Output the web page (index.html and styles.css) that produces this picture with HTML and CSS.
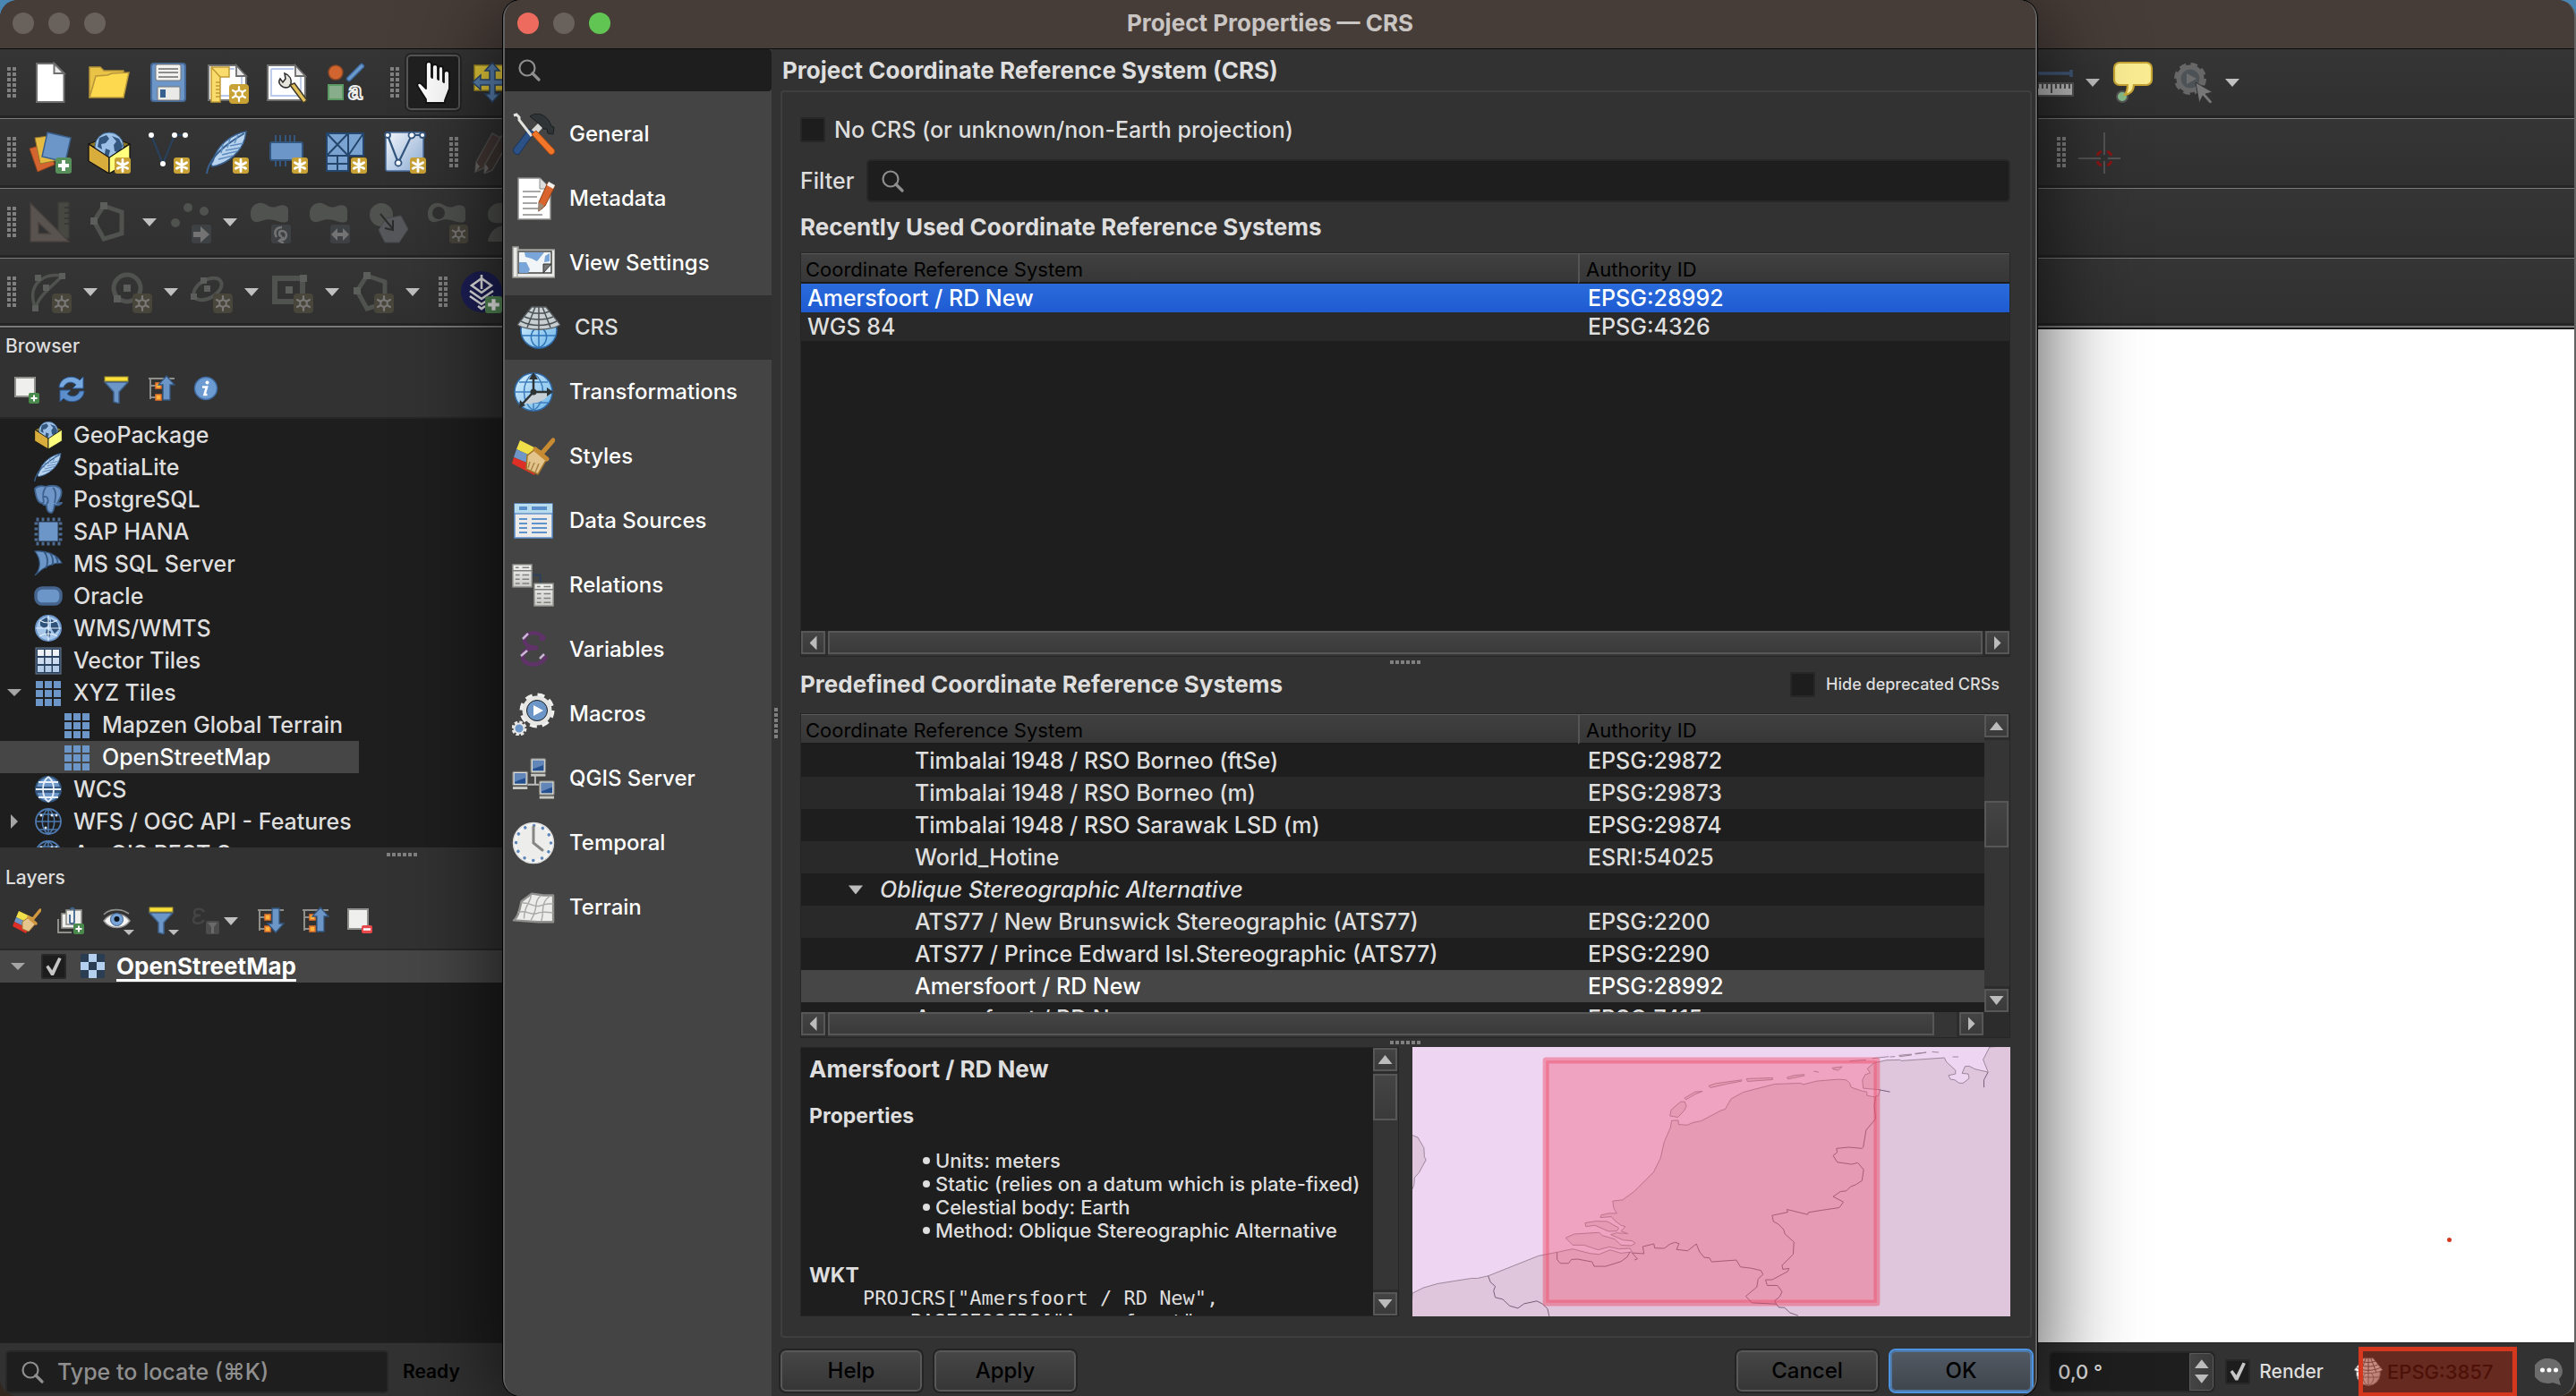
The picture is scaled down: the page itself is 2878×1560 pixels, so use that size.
FILE: index.html
```html
<!DOCTYPE html>
<html lang="en">
<head>
<meta charset="utf-8">
<title>Project Properties — CRS</title>
<link rel="stylesheet" href="styles.css">
</head>
<body>
<svg class="sprite" aria-hidden="true">
  <defs>
    <linearGradient id="gpsFill" x1="0" y1="0" x2="1" y2="1"><stop offset="0" stop-color="#f3f6fb"/><stop offset="1" stop-color="#8fb0d8"/></linearGradient>
    <linearGradient id="globeFill" x1="0" y1="0" x2="1" y2="1"><stop offset="0" stop-color="#d8f0ff"/><stop offset="1" stop-color="#6cb4e8"/></linearGradient>
    <linearGradient id="grayFill" x1="0" y1="0" x2="0" y2="1"><stop offset="0" stop-color="#f2f2f0"/><stop offset="1" stop-color="#c9c9c6"/></linearGradient>
    <g id="relTable"><rect x="0" y="0" width="22" height="26" fill="url(#grayFill)" stroke="#90918c" stroke-width="1.500"/><path d="M0 7h22M3 3.500h4M11 3.500h8M3 12h5M11 12h8M3 17h5M11 17h8M3 22h5M11 22h8" stroke="#80817d" stroke-width="1.600"/></g>
    <g id="serverPc"><rect x="0" y="0" width="17" height="16" rx="1" fill="#e2e2dd" stroke="#7f807b" stroke-width="1.300"/><rect x="2" y="2" width="13" height="12" fill="#25508f"/><path d="M2 2h13v5l-13 5z" fill="#6386b8"/><path d="M0 19h17" stroke="#c9c9c4" stroke-width="3"/></g>
  </defs>
  <symbol id="i-badge-star" viewBox="0 0 18 18"><rect width="18" height="18" rx="3" fill="#c9a235"/><path d="M9 2.500v13M3.400 5.800l11.200 6.400M3.400 12.200l11.200-6.400" stroke="#fff" stroke-width="2.800" stroke-linecap="round"/></symbol>
  <symbol id="i-badge-gear" viewBox="0 0 22 22"><rect width="22" height="22" rx="4" fill="#c9a235"/><path d="M11 3v16M4 7l14 8M4 15l14-8" stroke="#fff" stroke-width="2.200" stroke-linecap="round"/><circle cx="11" cy="11" r="3.800" fill="#c9a235" stroke="#fff" stroke-width="2"/></symbol>
  <symbol id="i-badge-gear-dim" viewBox="0 0 22 22"><rect width="22" height="22" rx="4" fill="#48453b"/><path d="M11 3v16M4 7l14 8M4 15l14-8" stroke="#797977" stroke-width="2.200" stroke-linecap="round"/><circle cx="11" cy="11" r="3.800" fill="#48453b" stroke="#797977" stroke-width="2"/></symbol>
  <symbol id="i-badge-plus" viewBox="0 0 18 18"><rect width="18" height="18" rx="3" fill="#58905b"/><path d="M9 3v12M3 9h12" stroke="#fff" stroke-width="4"/></symbol>
  <symbol id="i-caret" viewBox="0 0 24 24"><path d="M4 8h16l-8 9z" fill="#c0c0c0"/></symbol>
  <symbol id="i-search" viewBox="0 0 26 26"><circle cx="11" cy="11" r="8.500" fill="none" stroke="#8f8f8f" stroke-width="2.200"/><path d="M17 17l7 7" stroke="#8f8f8f" stroke-width="3.200" stroke-linecap="round"/></symbol>

  <symbol id="i-new" viewBox="0 0 48 48"><path d="M9 3h19.500L39.500 14v32H9z" fill="#fff" stroke="#6e6e6e" stroke-width="2"/><path d="M28.500 3v11h11z" fill="#e8e8e8" stroke="#6e6e6e" stroke-width="2"/></symbol>
  <symbol id="i-open" viewBox="0 0 48 48"><path d="M2 41V7h12l4 4h22v8" fill="#e8c346" stroke="#b7953a" stroke-width="1.500"/><path d="M2 41L9 17l13-1 5-2 19-1-6 28z" fill="#fcd94e" stroke="#b7953a" stroke-width="1.500"/></symbol>
  <symbol id="i-save" viewBox="0 0 48 48"><rect x="5" y="3" width="38" height="42" rx="3" fill="#6c96c8" stroke="#476c9c" stroke-width="2"/><rect x="10" y="4" width="28" height="18" rx="2" fill="#f2f2f0" stroke="#777" stroke-width="1"/><path d="M13 9h22M13 13h22M13 18h22" stroke="#6d6d68" stroke-width="1.600"/><rect x="12" y="29" width="25" height="15" rx="1" fill="#e9e9e7" stroke="#777" stroke-width="1"/><rect x="15" y="32" width="6" height="9" fill="#36608f"/></symbol>
  <symbol id="i-layout-page" viewBox="0 0 48 48"><path d="M3 5h30l12 12v27H3z" fill="#fff" stroke="#6e6e6e" stroke-width="2"/><path d="M7 9h25M40 18v21H7V9" fill="none" stroke="#b9c9ee" stroke-width="1.800"/><path d="M34 5v12h11z" fill="#e8e8e8" stroke="#6e6e6e" stroke-width="1.800"/></symbol>
  <symbol id="i-layout-new" viewBox="0 0 48 48"><use href="#i-layout-page"/><path d="M6 7h20v11H16v28H6z" fill="#f9dc6c" stroke="#c09a36" stroke-width="1.500"/><path d="M6 7l10 11M11 24h5M11 28h5M11 32h5M11 36h5M11 40h5" stroke="#c09a36" stroke-width="1.500"/><use href="#i-badge-gear" x="26" y="26" width="22" height="22"/></symbol>
  <symbol id="i-layout-manager" viewBox="0 0 48 48"><use href="#i-layout-page"/><path d="M17 20c-4 6 4 12 10 9l2-3c1-5-1-10-7-12l1 6-3 4z" fill="#e6e6df" stroke="#333" stroke-width="1.600"/><path d="M28 27l15 20 4-3-14-19z" fill="#e2c15a" stroke="#3d3a2a" stroke-width="1.500"/></symbol>
  <symbol id="i-style" viewBox="0 0 48 48"><circle cx="13" cy="13" r="8" fill="#d16530" stroke="#8d4826" stroke-width="1.500"/><path d="M28 20L42 6" stroke="#3f6fa6" stroke-width="6" stroke-linecap="round"/><path d="M28 20L42 6" stroke="#6c9acb" stroke-width="3" stroke-linecap="round"/><rect x="5" y="27" width="16" height="16" fill="#88ad8b" stroke="#599b62" stroke-width="2"/><text x="27" y="43" class="glyph-a">a</text></symbol>
  <symbol id="i-hand" viewBox="0 0 48 48"><path d="M16 47V43L7 29c-2-4 1-5 4-3l5 5V4c0-4 6-4 6 0v14l1 1V7c0-4 6-4 6 0v13l1 1V9c0-4 5-4 5 0v14l1 1V14c0-4 6-4 6 0v17l-5 13v3z" fill="#fff" stroke="#111" stroke-width="1.800" stroke-linejoin="round"/></symbol>
  <symbol id="i-pan-selection" viewBox="0 0 48 48"><rect x="4" y="5" width="34" height="28" fill="#e9cd3b" stroke="#a58f24" stroke-width="1.500"/><path d="M24 2l8 9h-5v10h10v-5l9 8-9 8v-5H27v10h5l-8 9-8-9h5V27H11v5l-9-8 9-8v5h10V11h-5z" fill="#5b84b4" stroke="#2d4b6e" stroke-width="1.500"/></symbol>
  <symbol id="i-add-layer" viewBox="0 0 48 48"><path d="M1 20l20-6 8 24-19 8z" fill="#d5652f" stroke="#8f431f"/><path d="M7 8l22-3 4 28-20 4z" fill="#e5bb42" stroke="#93752a"/><path d="M21 2l26 6-6 27-26-6z" fill="#6c96c8" stroke="#3c608c" stroke-width="1.500"/><use href="#i-badge-plus" x="30" y="30" width="18" height="18"/></symbol>
  <symbol id="i-box" viewBox="0 0 48 48"><path d="M1 15l23-9 23 9-23 12z" fill="#8a7320" stroke="#111"/><circle cx="24" cy="18" r="16" fill="#9cc0e6" stroke="#3c6696"/><path d="M13 8l8-3 3 4-4 5-5 1 1 6-5-3zM27 6l8 3 4 8-3 8-6-2-1-7 3-4zM20 20l5 2-2 8-4-4z" fill="#34577f"/><path d="M1 15l23 15v18L1 34z" fill="#d9ad3c" stroke="#111" stroke-width="1.300"/><path d="M47 15L24 30v18l23-14z" fill="#ffff7d" stroke="#111" stroke-width="1.300"/></symbol>
  <symbol id="i-new-gpkg" viewBox="0 0 48 48"><use href="#i-box"/><use href="#i-badge-star" x="30" y="30" width="18" height="18"/></symbol>
  <symbol id="i-new-shape" viewBox="0 0 48 48"><path d="M5 5l13 32L31 5h12" fill="none" stroke="#28425f" stroke-width="2"/><g fill="#fff"><circle cx="5" cy="5" r="3"/><circle cx="18" cy="37" r="3"/><circle cx="31" cy="5" r="3"/><circle cx="43" cy="5" r="3"/></g><use href="#i-badge-star" x="30" y="30" width="18" height="18"/></symbol>
  <symbol id="i-feather" viewBox="0 0 48 48"><path d="M45 1C28 4 12 17 8 34l-2 3 1 3C22 38 43 24 45 1z" fill="#b7d3ee" stroke="#38618f" stroke-width="1.500"/><path d="M1 48c2-16 16-30 42-45" fill="none" stroke="#38618f" stroke-width="2"/><path d="M14 32l16-4M18 27l17-4M22 22l17-3M27 17l15-3M19 15l-2 10M27 9l-3 10M36 5l-4 9" stroke="#5f8dc0" stroke-width="1.500"/></symbol>
  <symbol id="i-new-spatialite" viewBox="0 0 48 48"><use href="#i-feather"/><use href="#i-badge-star" x="30" y="30" width="18" height="18"/></symbol>
  <symbol id="i-new-memory" viewBox="0 0 48 48"><path d="M12 5v8M17 5v8M23 5v8M28 5v8M33 5v8M12 32v8M17 32v8M23 32v8" stroke="#33567f" stroke-width="2"/><rect x="6" y="13" width="36" height="20" rx="2" fill="#6c96c8" stroke="#33567f" stroke-width="2"/><use href="#i-badge-star" x="30" y="30" width="18" height="18"/></symbol>
  <symbol id="i-new-mesh" viewBox="0 0 48 48"><path d="M3 3h41v25H27v17H3z" fill="#7aa3d1" stroke="#24466c" stroke-width="2"/><path d="M27 3v25H3M3 3l24 25M27 3L3 28M44 3L27 28M15 28v17M3 37h24" fill="none" stroke="#24466c" stroke-width="2"/><use href="#i-badge-star" x="30" y="30" width="18" height="18"/></symbol>
  <symbol id="i-new-gps" viewBox="0 0 48 48"><rect x="3" y="2" width="42" height="43" rx="2" fill="url(#gpsFill)" stroke="#4a6f9f" stroke-width="1.500"/><path d="M5 5l12 31L32 5h12" fill="none" stroke="#33567f" stroke-width="2.200"/><g fill="#fff" stroke="#33567f" stroke-width="1.800"><circle cx="5" cy="5" r="3"/><circle cx="17" cy="36" r="3.500"/><circle cx="32" cy="5" r="3.500"/><circle cx="44" cy="5" r="3"/></g><use href="#i-badge-star" x="30" y="30" width="18" height="18"/></symbol>
  <symbol id="i-pencils" viewBox="0 0 48 48"><path d="M24 3l9 5-19 34-9 4 1-11z" fill="#463a37" stroke="#555552" stroke-width="1.500"/><path d="M34 6l9 5-19 33-9 4 1-11z" fill="#3e3532" stroke="#555552" stroke-width="1.500"/><path d="M5 46l1-11 4 5zM15 48l1-11 4 5z" fill="#6c6c6c"/></symbol>
  <symbol id="i-triangle" viewBox="0 0 48 48"><rect x="33" y="2" width="12" height="40" fill="#484842" stroke="#3c3c3a" stroke-width="1.500"/><path d="M40 8h5M40 14h5M40 20h5M40 26h5" stroke="#333" stroke-width="1.500"/><path d="M2 3l43 43H2zM11 25v12h13z" fill="#595350" fill-rule="evenodd" stroke="#48413e" stroke-width="1.500"/></symbol>
  <symbol id="i-poly" viewBox="0 0 48 48"><path d="M18 6l20 7v24l-20 6L7 23z" fill="none" stroke="#50524f" stroke-width="5"/><rect x="14" y="2" width="8" height="8" fill="#5c5e5c"/><rect x="3" y="19" width="8" height="8" fill="#5c5e5c"/></symbol>
  <symbol id="i-move-points" viewBox="0 0 48 48"><g fill="#50524f"><circle cx="22" cy="8" r="5"/><circle cx="40" cy="12" r="5"/><circle cx="8" cy="25" r="5"/></g><rect x="26" y="27" width="22" height="21" rx="3" fill="#3e4144"/><path d="M28 35h8v-6l10 9-10 9v-6h-8z" fill="#737373"/></symbol>
  <symbol id="i-blob" viewBox="0 0 48 48"><path d="M2 16C1 6 10 0 18 4c5 3 9 5 15 2 6-2 11 0 11 5v10c0 4-5 4-9 3-8-3-14-4-21-1C7 26 2 23 2 16z" fill="#50524f"/></symbol>
  <symbol id="i-rotate" viewBox="0 0 48 48"><use href="#i-blob"/><rect x="25" y="27" width="22" height="21" rx="3" fill="#3e4144"/><path d="M37 40c-4 0-4-6 0-6 6 0 8 9-2 11m4-4l-5 4 5 3M31 41c-4-6 0-11 6-11" fill="none" stroke="#737373" stroke-width="2.500"/></symbol>
  <symbol id="i-scale" viewBox="0 0 48 48"><use href="#i-blob"/><rect x="25" y="27" width="22" height="21" rx="3" fill="#3e4144"/><path d="M26 38l7-7v5h6v-5l7 7-7 7v-5h-6v5z" fill="#737373"/></symbol>
  <symbol id="i-simplify" viewBox="0 0 48 48"><circle cx="16" cy="16" r="13" fill="#50524f"/><path d="M21 20l17-3 8 15-10 15H20l-7-14z" fill="#55575b" stroke="#45474a"/><path d="M15 15l14 17M29 22v11l-9-2" fill="none" stroke="#2c2c2c" stroke-width="2"/></symbol>
  <symbol id="i-ring" viewBox="0 0 48 48"><use href="#i-blob"/><circle cx="14" cy="14" r="7" fill="#323232"/><use href="#i-badge-gear-dim" x="26" y="27" width="21" height="21"/></symbol>
  <symbol id="i-part" viewBox="0 0 48 48"><path d="M3 16C3 6 14 0 22 4v20C12 27 3 25 3 16zM3 46c2-12 10-18 20-18v18z" fill="#50524f"/></symbol>
  <symbol id="i-arc" viewBox="0 0 48 48"><path d="M8 43C-2 20 12 2 38 6M8 43C10 30 22 22 38 6" fill="none" stroke="#50524f" stroke-width="3.500"/><g fill="#5c5e5c"><rect x="34" y="3" width="7" height="7"/><rect x="7" y="5" width="7" height="7"/><rect x="16" y="16" width="7" height="7"/><rect x="4" y="39" width="7" height="7"/></g><use href="#i-badge-gear-dim" x="26" y="26" width="22" height="22"/></symbol>
  <symbol id="i-circle" viewBox="0 0 48 48"><circle cx="20" cy="20" r="15" fill="none" stroke="#50524f" stroke-width="5"/><rect x="16" y="16" width="8" height="8" fill="#5c5e5c"/><rect x="5" y="28" width="8" height="8" fill="#5c5e5c"/><use href="#i-badge-gear-dim" x="26" y="26" width="22" height="22"/></symbol>
  <symbol id="i-ellipse" viewBox="0 0 48 48"><ellipse cx="20" cy="21" rx="17" ry="10" transform="rotate(-30 20 21)" fill="none" stroke="#50524f" stroke-width="4"/><g fill="#5c5e5c"><rect x="12" y="8" width="7" height="7"/><rect x="16" y="17" width="7" height="7"/><rect x="1" y="26" width="7" height="7"/></g><use href="#i-badge-gear-dim" x="26" y="26" width="22" height="22"/></symbol>
  <symbol id="i-rect" viewBox="0 0 48 48"><rect x="5" y="9" width="31" height="26" fill="none" stroke="#50524f" stroke-width="6"/><rect x="17" y="18" width="8" height="8" fill="#5c5e5c"/><rect x="33" y="5" width="8" height="8" fill="#5c5e5c"/><use href="#i-badge-gear-dim" x="26" y="26" width="22" height="22"/></symbol>
  <symbol id="i-polygon-new" viewBox="0 0 48 48"><use href="#i-poly"/><use href="#i-badge-gear-dim" x="26" y="26" width="22" height="22"/></symbol>
  <symbol id="i-mergin" viewBox="0 0 48 48"><circle cx="24" cy="24" r="23" fill="#1d1f57"/><path d="M24 5v16M24 9l-11 8 11 8 11-8zM11 23l13 9 13-9M11 29l13 9 13-9M20 40l4 3 4-3" fill="none" stroke="#eee" stroke-width="2.600"/><use href="#i-badge-plus" x="28" y="29" width="19" height="19"/></symbol>
  <symbol id="i-measure" viewBox="0 0 48 48"><path d="M0 14h45M45 10v8" stroke="#41597a" stroke-width="3.500"/><rect x="-4" y="25" width="51" height="14" fill="#bcbcbc" stroke="#555" stroke-width="2"/><path d="M3 26v5M8 26v5M13 26v5M18 26v5M23 26v10M28 26v5M33 26v5M38 26v5M43 26v5" stroke="#444" stroke-width="1.800"/></symbol>
  <symbol id="i-tip" viewBox="0 0 48 48"><circle cx="12" cy="40" r="6" fill="#84b989" stroke="#555" stroke-width="2"/><path d="M9 2h30a6 6 0 0 1 6 6v13a6 6 0 0 1-6 6H25c0 6-4 10-10 11 2-3 3-7 3-11H9a6 6 0 0 1-6-6V8a6 6 0 0 1 6-6z" fill="#faec92" stroke="#c6a433" stroke-width="2.200"/></symbol>
  <symbol id="i-gear-run" viewBox="0 0 48 48"><circle cx="22" cy="20" r="15" fill="none" stroke="#676767" stroke-width="6" stroke-dasharray="7 4.780"/><circle cx="22" cy="20" r="13" fill="#4d5257" stroke="#676767" stroke-width="5"/><path d="M18 14l11 6-11 6z" fill="#6d6d6d"/><path d="M28 24l19 11-8 2 8 9-3 2-8-9-4 8z" fill="#777" stroke="#333"/></symbol>
  <symbol id="i-crosshair" viewBox="0 0 48 48"><path d="M29 2v25M29 34v14M0 31h25M33 31h14" stroke="#545454" stroke-width="2"/><circle cx="29" cy="31" r="8.500" fill="none" stroke="#8a1515" stroke-width="3" stroke-dasharray="7 6.350" stroke-dashoffset="-3"/></symbol>

  <symbol id="s-add" viewBox="0 0 32 32"><rect x="3" y="3" width="22" height="21" fill="#efefed" stroke="#8f908b" stroke-width="2"/><rect x="18" y="20" width="12" height="12" rx="2" fill="#498a4c"/><path d="M24 22.500v7M20.500 26h7" stroke="#fff" stroke-width="2"/></symbol>
  <symbol id="s-refresh" viewBox="0 0 32 32"><path d="M2 14C3 2 18-1 25 6l4-4v13H17l4-4c-5-5-12-3-14 3z" fill="#77a8de" stroke="#2c5c99"/><path d="M30 18c-1 12-16 15-23 8l-4 4V17h12l-4 4c5 5 12 3 14-3z" fill="#5b8ecb" stroke="#2c5c99"/></symbol>
  <symbol id="s-filter" viewBox="0 0 32 32"><path d="M3 8l10 11v11l6 2V19L29 8z" fill="#6c96c8" stroke="#3c608c" stroke-width="1.500"/><rect x="3" y="2" width="26" height="5" fill="#fbe03a" stroke="#9c8c2c"/></symbol>
  <symbol id="s-tree" viewBox="0 0 32 32"><path d="M2 4h29M4 4v23M4 12h6M4 25h6" fill="none" stroke="#8f908b" stroke-width="2"/><rect x="10" y="9" width="6" height="6" fill="#fcb43c" stroke="#e5742c" stroke-width="1.500"/><rect x="10" y="22" width="6" height="6" fill="#fcb43c" stroke="#e5742c" stroke-width="1.500"/></symbol>
  <symbol id="s-collapse" viewBox="0 0 32 32"><use href="#s-tree"/><path d="M22 1l9 10h-5v17h-8V11h-5z" fill="#6c96c8" stroke="#33567f" stroke-width="1.300"/></symbol>
  <symbol id="s-expand" viewBox="0 0 32 32"><use href="#s-tree"/><path d="M22 29l9-10h-5V2h-8v17h-5z" fill="#6c96c8" stroke="#33567f" stroke-width="1.300"/></symbol>
  <symbol id="s-info" viewBox="0 0 32 32"><circle cx="16" cy="15" r="12.500" fill="#6c9bd2" stroke="#3f6ba2" stroke-width="1.500"/><circle cx="17.500" cy="8.500" r="2" fill="#fff"/><path d="M12 13.500h5l-2.500 8.500h3" fill="none" stroke="#fff" stroke-width="2.600"/></symbol>
  <symbol id="s-brush" viewBox="0 0 32 32"><path d="M7 5l17 8-3 7L4 12z" fill="#f0df4a"/><path d="M4 12l17 8-3 5L2 17z" fill="#6f96c8"/><path d="M2 17l16 8-3 5L0 22z" fill="#dd2f26"/><path d="M11 17l7-5 8 7-8 9-7-3z" fill="#e6c58c" stroke="#a4762e"/><path d="M18 12l8 7M22 15l9-11" stroke="#cf963e" stroke-width="3.500" stroke-linecap="round"/></symbol>
  <symbol id="s-group" viewBox="0 0 32 32"><path d="M1 14v15h15" fill="none" stroke="#8f908b" stroke-width="2"/><rect x="5" y="8" width="17" height="16" fill="#efefed" stroke="#8f908b" stroke-width="1.600"/><rect x="10" y="4" width="17" height="16" fill="#efefed" stroke="#8f908b" stroke-width="1.600"/><path d="M14 9v8c0 3 5 3 5 0V4c0-3-4-3-4 0" fill="none" stroke="#3f648f" stroke-width="1.800"/><rect x="18" y="19" width="12" height="12" rx="2" fill="#498a4c"/><path d="M24 21.500v7M20.500 25h7" stroke="#fff" stroke-width="2"/></symbol>
  <symbol id="s-eye" viewBox="0 0 36 34"><path d="M2 10c6-7 20-7 28-1" fill="none" stroke="#8f908b" stroke-width="1.600"/><path d="M2 17c7-10 22-10 29 0-7 10-22 10-29 0z" fill="#f5f5f5" stroke="#9a9a98" stroke-width="1.500"/><circle cx="16.500" cy="15.500" r="7" fill="#77a3d6" stroke="#3c608c"/><circle cx="16.500" cy="15" r="3" fill="#0c1420"/><path d="M24 27h12l-6 6z" fill="#bdbdbd"/></symbol>
  <symbol id="s-filter-menu" viewBox="0 0 36 34"><use href="#s-filter" width="32" height="32"/><path d="M24 27h12l-6 6z" fill="#bdbdbd"/></symbol>
  <symbol id="s-expr-filter" viewBox="0 0 32 32"><path d="M14 6C11 1 3 2 3 7c0 3 3 3 7 3-6 0-8 2-8 5 0 5 9 5 12 0" fill="none" stroke="#444" stroke-width="2.500"/><rect x="16" y="16" width="15" height="15" rx="2" fill="#4c4c4c"/><path d="M18 18h11l-4 5v7h-3v-7z" fill="#6a6a6a"/></symbol>
  <symbol id="s-remove" viewBox="0 0 32 32"><rect x="3" y="3" width="22" height="22" fill="#efefed" stroke="#8f908b" stroke-width="2"/><rect x="18" y="21" width="12" height="9" rx="2" fill="#e8474b"/><path d="M20 25.500h8" stroke="#fff" stroke-width="2.500"/></symbol>

  <symbol id="t-elephant" viewBox="0 0 32 32"><path d="M1 4c4-4 9-3 12-2 6-2 14-2 17 3 2 5-2 12-4 15h5c-2 3-6 3-8 2-1 4-1 9-4 9s-5-3-5-9c-3 1-4 0-5-2-4 1-7-6-8-16z" fill="#6f96c8" stroke="#3f638f" stroke-width="1.800"/><path d="M13 3c-4 4-3 12-2 17M21 3c5 4 3 12 2 17M14 21c3-2 2-9-3-8" fill="none" stroke="#3f638f" stroke-width="1.800"/></symbol>
  <symbol id="t-chip" viewBox="0 0 32 32"><rect x="2.500" y="2.500" width="27" height="27" fill="none" stroke="#4d6a90" stroke-width="4" stroke-dasharray="3 3"/><rect x="5" y="5" width="22" height="22" fill="#6c96c8" stroke="#27374d"/></symbol>
  <symbol id="t-sail" viewBox="0 0 32 32"><path d="M1 2c14-1 25 4 30 13-12 0-22 6-30 14 7-8 7-18 0-27z" fill="#6c96c8" stroke="#33567f" stroke-width="1.200"/><path d="M11 2c5 6 5 14 2 19M18 4c4 6 4 10 2 14M24 8c2 3 3 6 2 8" fill="none" stroke="#33567f" stroke-width="1.800"/></symbol>
  <symbol id="t-oracle" viewBox="0 0 32 32"><rect x="2" y="7" width="28" height="18" rx="7" fill="#6c96c8" stroke="#46658e" stroke-width="3.500"/></symbol>
  <symbol id="t-globe-land" viewBox="0 0 32 32"><circle cx="16" cy="16" r="14" fill="#a6c6ea" stroke="#6c96c8" stroke-width="2"/><path d="M7 8l7-4 4 4-3 6-4 2-4-3zM19 6l7 4 2 7-5 5-4-6zM14 17l5 3-2 7-4-5z" fill="#2f5178"/><path d="M16 2v28M2 16h28M6 7c6 4 14 4 20 0M6 25c6-4 14-4 20 0" fill="none" stroke="#e4f0fb" stroke-width="1.200"/></symbol>
  <symbol id="t-grid" viewBox="0 0 32 32"><g fill="#6c96c8"><rect x="2" y="3" width="8" height="8"/><rect x="12" y="3" width="8" height="8"/><rect x="22" y="3" width="8" height="8"/><rect x="2" y="13" width="8" height="8"/><rect x="12" y="13" width="8" height="8"/><rect x="22" y="13" width="8" height="8"/><rect x="2" y="23" width="8" height="8"/><rect x="12" y="23" width="8" height="8"/><rect x="22" y="23" width="8" height="8"/></g></symbol>
  <symbol id="t-grid-light" viewBox="0 0 32 32"><rect x="2" y="2" width="28" height="29" fill="#28425f" stroke="#6b7c92"/><g fill="#eef2f7"><rect x="4" y="4" width="7" height="7"/><rect x="12.500" y="4" width="7" height="7"/><rect x="21" y="4" width="7" height="7"/></g><g fill="#cddcee"><rect x="4" y="13" width="7" height="7"/><rect x="12.500" y="13" width="7" height="7"/><rect x="21" y="13" width="7" height="7"/></g><g fill="#b4cce8"><rect x="4" y="22" width="7" height="7"/><rect x="12.500" y="22" width="7" height="7"/><rect x="21" y="22" width="7" height="7"/></g></symbol>
  <symbol id="t-globe-wcs" viewBox="0 0 32 32"><circle cx="16" cy="16" r="14" fill="#6c96c8" stroke="#33567f" stroke-width="2"/><path d="M2 13h28v7H2z" fill="#33567f"/><path d="M2 16h28M5 8h22M5 25h22M16 2c-8 6-8 22 0 28M16 2c8 6 8 22 0 28" fill="none" stroke="#e8f0fa" stroke-width="1.800"/></symbol>
  <symbol id="t-globe-wfs" viewBox="0 0 32 32"><circle cx="16" cy="16" r="14" fill="none" stroke="#4e7ab0" stroke-width="1.800"/><path d="M2 16h28M5 8h22M5 25h22M16 2v28M16 2c-9 6-9 22 0 28M16 2c9 6 9 22 0 28" fill="none" stroke="#4e7ab0" stroke-width="1.500"/><g fill="#dfe8f4"><circle cx="8" cy="9" r="1.500"/><circle cx="20" cy="9" r="1.500"/><circle cx="25" cy="9" r="1.500"/><circle cx="13" cy="23" r="1.500"/></g></symbol>
  <symbol id="t-raster" viewBox="0 0 27 27"><path d="M0 0h27v27H0z" fill="#2b3d53"/><path d="M9 0h9v9H9zM0 9h9v9H0zM18 9h9v9h-9zM9 18h9v9H9z" fill="#b5d0ee"/></symbol>

  <symbol id="d-tools" viewBox="0 0 48 48"><path d="M20 4c8-6 20-2 24 11l3 1-1 8-6-1-1-5c-4 1-6-1-8-5z" fill="#2f3437" stroke="#1c1f21"/><path d="M29 12l5 5-8 9-6-5z" fill="#d8d8d4"/><path d="M25 22L8 46c-3 2-8-2-6-6l17-22z" fill="#2b5187" stroke="#16335c"/><path d="M2 3l3-1 3 3v3l14 18" fill="none" stroke="#e2e2df" stroke-width="3"/><path d="M22 24l5-4 20 21c2 4-2 7-5 5z" fill="#f1762a" stroke="#b14a0d"/></symbol>
  <symbol id="d-metadata" viewBox="0 0 48 48"><path d="M7 1h24l12 12v34H7z" fill="#fff" stroke="#8b8b88" stroke-width="1.500"/><path d="M12 16h20M12 22h16M12 29h16M12 35h22M12 42h22" stroke="#8b8b88" stroke-width="1.500"/><path d="M31 1v12h12" fill="#ddd" stroke="#8b8b88"/><path d="M40 6l8 4-11 22-7 6V28z" fill="#d9652c" stroke="#8d3f17"/><path d="M41 5l7 4-2 4-7-4z" fill="#f2f0ee"/><path d="M30 28l6 4-7 7z" fill="#9a8a78"/></symbol>
  <symbol id="d-view" viewBox="0 0 48 48"><path d="M1 6h6v3h41v31H1z" fill="#e9e9e7" stroke="#9a9a97" stroke-width="1.500"/><rect x="7" y="11" width="37" height="24" fill="#f2f5f8" stroke="#444" stroke-width="1.500"/><path d="M14 12h22l-4 5-4 5-6-3-7-2zM8 23h8l4 8-2 4H8zM42 13v9l-6 1 1-7z" fill="#79a5d8"/><path d="M35 35V25h9l-9 10z" fill="#777" stroke="#333"/><path d="M6 7v34" stroke="#9a9a97"/></symbol>
  <symbol id="d-crs" viewBox="0 0 48 48"><circle cx="24" cy="27" r="20" fill="url(#globeFill)" stroke="#2f6aa8" stroke-width="1.500"/><path d="M24 22v25M5 33h38M24 22c-13 8-10 20 0 25M24 22c13 8 10 20 0 25" fill="none" stroke="#2f74b8" stroke-width="1.500"/><path d="M16 1h16l16 20c-12 7-36 7-48 0z" fill="#c8cfd3" stroke="#555a5e" stroke-width="1.300"/><path d="M12 6c7 3 17 3 24 0M8 12c9 4 23 4 32 0M4 17c12 6 28 6 40 0M20 1l-9 23M24 1v25M28 1l9 23" fill="none" stroke="#4d5256" stroke-width="1.500"/></symbol>
  <symbol id="d-transform" viewBox="0 0 48 48"><circle cx="24" cy="24" r="21" fill="url(#globeFill)" stroke="#2f6aa8" stroke-width="1.500"/><path d="M3 24h42M8 13h32M8 36h32M24 3c-14 10-14 32 0 42M24 3c14 10 14 32 0 42M24 3v42" fill="none" stroke="#3f7dbb" stroke-width="1.500"/><path d="M24 24h18c-2 9-14 14-29 13z" fill="#c6d0d6"/><path d="M24 24V6M24 24h18M24 24L11 38" stroke="#2e3336" stroke-width="2.500"/><path d="M24 2l5 8H19zM46 24l-7 5V19zM8 42l1-9 6 6z" fill="#2e3336"/><circle cx="24" cy="24" r="3.500" fill="#2e3336"/></symbol>
  <symbol id="d-styles" viewBox="0 0 48 48"><path d="M9 6l26 13-4 9L5 16z" fill="#efdf49"/><path d="M5 16l26 12-3 8L2 25z" fill="#6f96c8"/><path d="M2 25l26 11-3 9L0 32z" fill="#dd2f26"/><path d="M17 23l9-7 13 11-10 17-13-6z" fill="#e3c48c" stroke="#9e7028" stroke-width="1.500"/><path d="M20 30l-2 7M25 31l-4 9M30 32l-4 10" stroke="#a98446" stroke-width="1.500"/><path d="M26 16l13 11M33 21L46 6" stroke="#c78b33" stroke-width="5" stroke-linecap="round"/></symbol>
  <symbol id="d-sources" viewBox="0 0 48 48"><rect x="3" y="5" width="42" height="38" fill="#ecebea" stroke="#5b8fcb" stroke-width="1.500"/><path d="M3 5h42v10H3z" fill="#b6dcee"/><path d="M3 16h42" stroke="#5b8fcb" stroke-width="1.500"/><path d="M8 10h9M22 10h17" stroke="#5b8fcb" stroke-width="4"/><path d="M8 22h9M22 22h17M8 27h9M22 27h17M8 32h9M22 32h17M8 37h9M22 37h17" stroke="#5f93cc" stroke-width="2"/></symbol>
  <symbol id="d-relations" viewBox="0 0 50 50"><path d="M22 13h11v12" fill="none" stroke="#2a425f" stroke-width="1.800"/><use href="#relTable" x="1" y="1"/><use href="#relTable" x="26" y="23"/></symbol>
  <symbol id="d-variables" viewBox="0 0 48 48"><path d="M36 12C32 3 14 3 14 13c0 6 7 9 15 9-10 0-17 3-17 10 0 11 22 12 26-1" fill="none" stroke="#603368" stroke-width="4.500"/><circle cx="34" cy="11" r="3.500" fill="#603368"/><path d="M12 12l6-6M10 31l7-6M31 34l5-5" stroke="#c9b7d6" stroke-width="2.500"/></symbol>
  <symbol id="d-macros" viewBox="0 0 48 48"><circle cx="28" cy="20" r="16.500" fill="none" stroke="#efefed" stroke-width="6" stroke-dasharray="7.400 5.560"/><circle cx="28" cy="20" r="14" fill="#6c96c8" stroke="#e6e6e4" stroke-width="5"/><circle cx="28" cy="20" r="11.500" fill="#6c96c8" stroke="#222"/><path d="M24 14v12l11-6z" fill="#fff"/><circle cx="8" cy="40" r="7" fill="none" stroke="#e6e6e4" stroke-width="3" stroke-dasharray="3.500 2"/><circle cx="8" cy="40" r="5.500" fill="#6c96c8" stroke="#e6e6e4" stroke-width="2"/></symbol>
  <symbol id="d-server" viewBox="0 0 50 50"><path d="M27 22v11M16 32h16" stroke="#bbb" stroke-width="2"/><use href="#serverPc" x="1" y="17"/><use href="#serverPc" x="22" y="2"/><use href="#serverPc" x="32" y="28"/></symbol>
  <symbol id="d-clock" viewBox="0 0 48 48"><circle cx="24" cy="24" r="22.500" fill="#f4f4f2" stroke="#ddd" stroke-width="1.500"/><circle cx="24" cy="24" r="19" fill="#ededeb"/><circle cx="24" cy="24" r="19.500" fill="none" stroke="#5d86ba" stroke-width="3.500" stroke-linecap="round" stroke-dasharray="0.100 10.110"/><path d="M24 6v18l10 8" fill="none" stroke="#858682" stroke-width="3" stroke-linecap="round"/></symbol>
  <symbol id="d-terrain" viewBox="0 0 50 48"><path d="M2 39c6-4 7-14 9-22l12-9 14 2h11v31H30z" fill="#ececea" stroke="#8f908d" stroke-width="2.500" stroke-linejoin="round"/><path d="M11 19c9-2 14 6 22 3s10-2 15-2M7 30c8-4 16 4 22 1s12-1 19-1M22 9c1 8-8 12-8 28M34 10c-10 8-2 14-12 29M44 11c-12 8-6 20-10 29" fill="none" stroke="#a9aaa7" stroke-width="1.500"/></symbol>
</svg>

<div class="main-window">
  <header class="titlebar">
    <span class="light"></span><span class="light"></span><span class="light"></span>
  </header>

  <div class="toolbars">
    <div class="toolbar">
      <span class="grip"></span>
      <button class="tool" aria-label="New Project"><svg><use href="#i-new"/></svg></button>
      <button class="tool" aria-label="Open Project"><svg><use href="#i-open"/></svg></button>
      <button class="tool" aria-label="Save Project"><svg><use href="#i-save"/></svg></button>
      <button class="tool" aria-label="New Print Layout"><svg><use href="#i-layout-new"/></svg></button>
      <button class="tool" aria-label="Layout Manager"><svg><use href="#i-layout-manager"/></svg></button>
      <button class="tool" aria-label="Style Manager"><svg><use href="#i-style"/></svg></button>
      <span class="grip grip-next"></span>
      <button class="tool tool-active" aria-label="Pan Map"><svg><use href="#i-hand"/></svg></button>
      <button class="tool" aria-label="Pan Map to Selection"><svg><use href="#i-pan-selection"/></svg></button>
      <div class="tool-end">
        <button class="tool" aria-label="Measure"><svg><use href="#i-measure"/></svg></button>
        <button class="drop" aria-label="Measure options"><svg><use href="#i-caret"/></svg></button>
        <button class="tool" aria-label="Map Tips"><svg><use href="#i-tip"/></svg></button>
        <button class="tool" aria-label="Run Feature Action"><svg><use href="#i-gear-run"/></svg></button>
        <button class="drop" aria-label="Action options"><svg><use href="#i-caret"/></svg></button>
      </div>
    </div>
    <div class="toolbar">
      <span class="grip"></span>
      <button class="tool" aria-label="Data Source Manager"><svg><use href="#i-add-layer"/></svg></button>
      <button class="tool" aria-label="New GeoPackage Layer"><svg><use href="#i-new-gpkg"/></svg></button>
      <button class="tool" aria-label="New Shapefile Layer"><svg><use href="#i-new-shape"/></svg></button>
      <button class="tool" aria-label="New SpatiaLite Layer"><svg><use href="#i-new-spatialite"/></svg></button>
      <button class="tool" aria-label="New Scratch Layer"><svg><use href="#i-new-memory"/></svg></button>
      <button class="tool" aria-label="New Mesh Layer"><svg><use href="#i-new-mesh"/></svg></button>
      <button class="tool" aria-label="New GPX Layer"><svg><use href="#i-new-gps"/></svg></button>
      <span class="grip grip-next"></span>
      <button class="tool" aria-label="Toggle Editing" disabled><svg><use href="#i-pencils"/></svg></button>
      <div class="tool-end tool-end-narrow">
        <span class="grip"></span>
        <button class="tool" aria-label="Capture Coordinate"><svg><use href="#i-crosshair"/></svg></button>
      </div>
    </div>
    <div class="toolbar">
      <span class="grip"></span>
      <button class="tool" aria-label="Advanced Digitizing" disabled><svg><use href="#i-triangle"/></svg></button>
      <button class="tool" aria-label="Move Feature" disabled><svg><use href="#i-poly"/></svg></button>
      <button class="drop" aria-label="Digitize options"><svg><use href="#i-caret"/></svg></button>
      <button class="tool" aria-label="Copy and Move" disabled><svg><use href="#i-move-points"/></svg></button>
      <button class="drop" aria-label="Move options"><svg><use href="#i-caret"/></svg></button>
      <button class="tool" aria-label="Rotate Feature" disabled><svg><use href="#i-rotate"/></svg></button>
      <button class="tool" aria-label="Scale Feature" disabled><svg><use href="#i-scale"/></svg></button>
      <button class="tool" aria-label="Simplify Feature" disabled><svg><use href="#i-simplify"/></svg></button>
      <button class="tool" aria-label="Add Ring" disabled><svg><use href="#i-ring"/></svg></button>
      <button class="tool" aria-label="Add Part" disabled><svg><use href="#i-part"/></svg></button>
    </div>
    <div class="toolbar toolbar-last">
      <span class="grip"></span>
      <button class="tool" aria-label="Circular String" disabled><svg><use href="#i-arc"/></svg></button>
      <button class="drop" aria-label="Arc options"><svg><use href="#i-caret"/></svg></button>
      <button class="tool" aria-label="Add Circle" disabled><svg><use href="#i-circle"/></svg></button>
      <button class="drop" aria-label="Circle options"><svg><use href="#i-caret"/></svg></button>
      <button class="tool" aria-label="Add Ellipse" disabled><svg><use href="#i-ellipse"/></svg></button>
      <button class="drop" aria-label="Ellipse options"><svg><use href="#i-caret"/></svg></button>
      <button class="tool" aria-label="Add Rectangle" disabled><svg><use href="#i-rect"/></svg></button>
      <button class="drop" aria-label="Rectangle options"><svg><use href="#i-caret"/></svg></button>
      <button class="tool" aria-label="Add Regular Polygon" disabled><svg><use href="#i-polygon-new"/></svg></button>
      <button class="drop" aria-label="Polygon options"><svg><use href="#i-caret"/></svg></button>
      <span class="grip grip-next"></span>
      <button class="tool" aria-label="Add 3D Tiles"><svg><use href="#i-mergin"/></svg></button>
    </div>
  </div>

  <div class="workspace">
    <div class="docks">
      <section class="dock browser">
        <h2 class="dock-title">Browser</h2>
        <div class="dock-tools">
          <button aria-label="Add Selected Layers"><svg><use href="#s-add"/></svg></button>
          <button aria-label="Refresh"><svg><use href="#s-refresh"/></svg></button>
          <button aria-label="Filter Browser"><svg><use href="#s-filter"/></svg></button>
          <button aria-label="Collapse All"><svg><use href="#s-collapse"/></svg></button>
          <button aria-label="Properties"><svg><use href="#s-info"/></svg></button>
        </div>
        <div class="tree-view">
          <ul class="tree">
            <li><span class="twist"></span><svg><use href="#i-box"/></svg>GeoPackage</li>
            <li><span class="twist"></span><svg><use href="#i-feather"/></svg>SpatiaLite</li>
            <li><span class="twist"></span><svg><use href="#t-elephant"/></svg>PostgreSQL</li>
            <li><span class="twist"></span><svg><use href="#t-chip"/></svg>SAP HANA</li>
            <li><span class="twist"></span><svg><use href="#t-sail"/></svg>MS SQL Server</li>
            <li><span class="twist"></span><svg><use href="#t-oracle"/></svg>Oracle</li>
            <li><span class="twist"></span><svg><use href="#t-globe-land"/></svg>WMS/WMTS</li>
            <li><span class="twist"></span><svg><use href="#t-grid-light"/></svg>Vector Tiles</li>
            <li><span class="twist twist-open"></span><svg><use href="#t-grid"/></svg>XYZ Tiles</li>
            <li class="child"><span class="twist"></span><svg><use href="#t-grid"/></svg>Mapzen Global Terrain</li>
            <li class="child selected"><span class="twist"></span><svg><use href="#t-grid"/></svg>OpenStreetMap</li>
            <li><span class="twist"></span><svg><use href="#t-globe-wcs"/></svg>WCS</li>
            <li><span class="twist twist-closed"></span><svg><use href="#t-globe-wfs"/></svg>WFS / OGC API - Features</li>
            <li><span class="twist"></span><svg><use href="#t-globe-wfs"/></svg>ArcGIS REST Servers</li>
          </ul>
        </div>
      </section>
      <div class="split-h"><span class="dots-h"></span></div>
      <section class="dock layers">
        <h2 class="dock-title">Layers</h2>
        <div class="dock-tools">
          <button aria-label="Open Layer Styling"><svg><use href="#s-brush"/></svg></button>
          <button aria-label="Add Group"><svg><use href="#s-group"/></svg></button>
          <button aria-label="Manage Map Themes"><svg class="wide"><use href="#s-eye"/></svg></button>
          <button aria-label="Filter Legend"><svg class="wide"><use href="#s-filter-menu"/></svg></button>
          <button class="menu" aria-label="Filter by Expression"><svg><use href="#s-expr-filter"/></svg><svg class="mini"><use href="#i-caret"/></svg></button>
          <button aria-label="Expand All"><svg><use href="#s-expand"/></svg></button>
          <button aria-label="Collapse All"><svg><use href="#s-collapse"/></svg></button>
          <button aria-label="Remove Layer"><svg><use href="#s-remove"/></svg></button>
        </div>
        <div class="layer-view">
          <div class="layer-row">
            <span class="twist twist-open"></span>
            <input type="checkbox" id="osm" class="check" checked>
            <svg><use href="#t-raster"/></svg>
            <label for="osm">OpenStreetMap</label>
          </div>
        </div>
      </section>
    </div>
    <main class="canvas"><span class="marker"></span></main>
  </div>

  <footer class="statusbar">
    <div class="locator"><svg><use href="#i-search"/></svg><input type="text" aria-label="Locate" placeholder="Type to locate (⌘K)"></div>
    <span class="ready">Ready</span>
    <div class="status-end">
      <div class="spin">
        <input type="text" aria-label="Rotation" value="0,0 °">
        <div class="spin-buttons"><button aria-label="Increase"><i class="tri up"></i></button><button aria-label="Decrease"><i class="tri down"></i></button></div>
      </div>
      <label class="render"><input type="checkbox" class="check" checked>Render</label>
      <button class="crs-status"><svg><use href="#d-crs"/></svg><span>EPSG:3857</span></button>
      <button class="messages" aria-label="Messages"><svg viewBox="0 0 32 30"><path d="M16 0a16 14 0 1 0 4 27l9 3-2-7A16 14 0 0 0 16 0z" fill="#6c6c6c"/><g fill="#fff"><circle cx="8.500" cy="13" r="2.500"/><circle cx="16" cy="13" r="2.500"/><circle cx="23.500" cy="13" r="2.500"/></g></svg></button>
    </div>
  </footer>
</div>

<div class="dialog" role="dialog" aria-labelledby="dialog-title">
  <header class="titlebar">
    <span class="light close"></span><span class="light"></span><span class="light zoom"></span>
    <h1 id="dialog-title">Project Properties — CRS</h1>
  </header>
  <div class="dialog-body">
    <aside class="sidebar">
      <div class="side-search"><svg><use href="#i-search"/></svg><input type="text" aria-label="Search settings"></div>
      <nav class="side-list">
        <button><svg><use href="#d-tools"/></svg>General</button>
        <button><svg><use href="#d-metadata"/></svg>Metadata</button>
        <button><svg><use href="#d-view"/></svg>View Settings</button>
        <button class="current"><svg><use href="#d-crs"/></svg>CRS</button>
        <button><svg><use href="#d-transform"/></svg>Transformations</button>
        <button><svg><use href="#d-styles"/></svg>Styles</button>
        <button><svg><use href="#d-sources"/></svg>Data Sources</button>
        <button><svg><use href="#d-relations"/></svg>Relations</button>
        <button><svg><use href="#d-variables"/></svg>Variables</button>
        <button><svg><use href="#d-macros"/></svg>Macros</button>
        <button><svg><use href="#d-server"/></svg>QGIS Server</button>
        <button><svg><use href="#d-clock"/></svg>Temporal</button>
        <button><svg><use href="#d-terrain"/></svg>Terrain</button>
      </nav>
    </aside>
    <div class="split-v"><span class="dots-v"></span></div>
    <div class="pane">
      <h2 class="pane-title">Project Coordinate Reference System (CRS)</h2>
      <div class="frame">
        <label class="no-crs"><input type="checkbox" class="check">No CRS (or unknown/non-Earth projection)</label>
        <div class="filter-row">
          <label for="filter">Filter</label>
          <div class="filter-box"><svg><use href="#i-search"/></svg><input type="text" id="filter"></div>
        </div>
        <h3 class="section-title">Recently Used Coordinate Reference Systems</h3>
        <div class="view recent">
          <div class="view-body">
            <table>
              <colgroup><col class="col-name"><col></colgroup>
              <thead><tr><th>Coordinate Reference System</th><th>Authority ID</th></tr></thead>
              <tbody>
                <tr class="active"><td>Amersfoort / RD New</td><td>EPSG:28992</td></tr>
                <tr class="alt"><td>WGS 84</td><td>EPSG:4326</td></tr>
              </tbody>
            </table>
          </div>
          <div class="scroll-x"><button aria-label="Scroll left"><i class="tri left"></i></button><div class="track"><div class="thumb"></div></div><button aria-label="Scroll right"><i class="tri right"></i></button></div>
        </div>
        <div class="split-h"><span class="dots-h"></span></div>
        <div class="section-row">
          <h3>Predefined Coordinate Reference Systems</h3>
          <label class="hide-dep"><input type="checkbox" class="check">Hide deprecated CRSs</label>
        </div>
        <div class="view predefined">
          <div class="view-main">
            <div class="view-body">
              <table>
                <colgroup><col class="col-name"><col></colgroup>
                <thead><tr><th>Coordinate Reference System</th><th>Authority ID</th></tr></thead>
                <tbody>
                  <tr><td class="leaf">Timbalai 1948 / RSO Borneo (ftSe)</td><td>EPSG:29872</td></tr>
                  <tr class="alt"><td class="leaf">Timbalai 1948 / RSO Borneo (m)</td><td>EPSG:29873</td></tr>
                  <tr><td class="leaf">Timbalai 1948 / RSO Sarawak LSD (m)</td><td>EPSG:29874</td></tr>
                  <tr class="alt"><td class="leaf">World_Hotine</td><td>ESRI:54025</td></tr>
                  <tr><td class="branch"><i class="tri down"></i><em>Oblique Stereographic Alternative</em></td><td></td></tr>
                  <tr class="alt"><td class="leaf">ATS77 / New Brunswick Stereographic (ATS77)</td><td>EPSG:2200</td></tr>
                  <tr><td class="leaf">ATS77 / Prince Edward Isl.Stereographic (ATS77)</td><td>EPSG:2290</td></tr>
                  <tr class="chosen"><td class="leaf">Amersfoort / RD New</td><td>EPSG:28992</td></tr>
                  <tr><td class="leaf">Amersfoort / RD New</td><td>EPSG:7415</td></tr>
                </tbody>
              </table>
            </div>
            <div class="scroll-y"><button aria-label="Scroll up"><i class="tri up"></i></button><div class="track track-crs"><div class="thumb"></div></div><button aria-label="Scroll down"><i class="tri down"></i></button></div>
          </div>
          <div class="scroll-x scroll-x-corner"><button aria-label="Scroll left"><i class="tri left"></i></button><div class="track track-part"><div class="thumb"></div></div><button aria-label="Scroll right"><i class="tri right"></i></button></div>
        </div>
        <div class="split-h split-thin"><span class="dots-h"></span></div>
        <div class="details">
          <div class="view info">
            <div class="info-text">
              <h3>Amersfoort / RD New</h3>
              <h4>Properties</h4>
              <ul>
                <li>Units: meters</li>
                <li>Static (relies on a datum which is plate-fixed)</li>
                <li>Celestial body: Earth</li>
                <li>Method: Oblique Stereographic Alternative</li>
              </ul>
              <h4 class="wkt">WKT</h4>
<pre>PROJCRS["Amersfoort / RD New",
    BASEGEOGCRS["Amersfoort",</pre>
            </div>
            <div class="scroll-y"><button aria-label="Scroll up"><i class="tri up"></i></button><div class="track track-info"><div class="thumb"></div></div><button aria-label="Scroll down"><i class="tri down"></i></button></div>
          </div>
          <svg class="map" viewBox="39 60 1451 900" preserveAspectRatio="none" role="img" aria-label="Area of use">
            <path class="sea" d="M39 60H1490V960H39z"/>
            <path class="land" d="M39 883L65 865 100 851 183 833 197 833 223 825 345 758 390 746 428 735 470 750 492 753 519 738 545 749 572 745 567 733 540 735 517 728 490 738 455 722 428 722 411 698 432 685 492 680 500 690 530 702 545 722 570 724 580 716 572 708 550 705 520 687 535 681 562 684 545 675 556 660 545 656 530 640 522 627 495 630 497 622 515 616 535 616 528 600 525 575 549 571 577 543 624 479 641 432 650 378 665 330 668 306 684 305 685 319 706 321 719 313 740 307 788 272 798 268 812 234 842 211 918 184 980 181 988 185 1020 174 1072 168 1092 170 1100 180 1104 195 1130 207 1142 210 1142 222 1160 227 1170 222 1174 203 1133 198 1131 170 1138 152 1150 147 1143 132 1160 113 1190 104 1222 103 1225 106 1330 96 1335 110 1357 138 1357 150 1340 155 1345 168 1355 170 1365 180 1375 181 1390 165 1388 150 1373 148 1380 125 1390 124 1405 134 1436 144 1424 102 1440 60 1495 55V965H35z"/>
            <path class="land" d="M30 350L39 355 52 362 67 397 68 427 72 437 55 480 44 497 43 520 39 535 30 540zM458 648L485 642 512 643 540 665 535 675 515 676 482 656 460 660zM664 290L667 270 690 243 700 243 704 258 697 275 683 295zM699 231L725 210 743 208 725 218 703 236zM758 190L775 182 838 170 838 174 800 184 762 196zM850 166L913 163 913 169 852 175zM948 162L965 155 990 152 990 156 950 167zM1013 141l12 3M1058 130l24-4-10 12-12-4zM1100 107l40-4M1155 98l40-6M1198 93l12-1M1220 88l30-4v3l-28 5zM1258 82l28-4-26 6M1300 76l16 2M1350 93l14 0"/>
            <path class="border" d="M1163 227L1160 257 1163 300 1140 338 1133 395 1130 399 1098 395 1068 399 1070 412 1060 423 1070 445 1105 452 1120 447 1134 470 1130 507 1115 520 1102 527 1092 541 1078 543 1060 560 1085 578 1075 597 1030 606 1000 613 998 620 975 612 948 603 950 612 912 623 915 643 927 652 940 670 943 685 965 712 963 753 936 790 938 803 953 800 950 810 912 838 896 838 900 857 925 857 936 878 930 895 918 908 922 919 863 915 848 893 875 862 878 835 890 820 885 807 860 799 835 795 825 772 765 778 760 765 747 763 736 745 728 718 707 741 680 737 686 717 677 713 665 718 650 733 627 732 625 718 598 727 601 751 572 748 585 768 578 772M390 746L390 770 398 783 418 783 425 770 440 769 475 778 480 793 508 793 545 777 560 762 567 745M922 919L928 930 942 931 955 948 975 958M223 825L228 845 240 860 236 875 240 897 258 903 275 925 295 933 310 918 341 909 355 919 367 935 371 960M1172 203L1198 210M1436 144L1426 170 1426 195"/>
            <rect x="363" y="105" width="803" height="810" class="extent"/>
            <rect x="363" y="105" width="803" height="810" class="extent-line"/>
          </svg>
        </div>
      </div>
      <div class="actions">
        <button>Help</button>
        <button>Apply</button>
        <button class="push">Cancel</button>
        <button class="primary">OK</button>
      </div>
    </div>
  </div>
</div>
</body>
</html>
```
FILE: styles.css
```css
* { box-sizing: border-box; }

body {
  margin: 0;
  height: 100vh;
  overflow: hidden;
  position: relative;
  background: linear-gradient(#4a86b4, #33281f);
  font: 500 25px/36px Inter, "Liberation Sans", sans-serif;
  color: #dedede;
}

h1, h2, h3, h4, ul { margin: 0; padding: 0; }
ul { list-style: none; }
svg { display: block; flex: none; }
button, input { font: inherit; color: inherit; margin: 0; }
button { background: none; border: 0; padding: 0; }
input[type="text"] { background: none; border: 0; padding: 0; outline: 0; min-width: 0; flex: 1; }
input::placeholder { color: #8f8f8f; opacity: 1; }
.sprite { position: absolute; width: 0; height: 0; }
.glyph-a { font: 700 28px "Liberation Sans", sans-serif; fill: #333; stroke: #eee; stroke-width: 2px; }

/* Shared controls */
.check {
  appearance: none;
  flex: none;
  width: 28px;
  height: 28px;
  background: #1d1d1d;
  border: 2px solid #272727;
  border-radius: 2px;
}
.check:checked::before {
  content: "";
  display: block;
  width: 24px;
  height: 24px;
  background: #c6c6c6;
  clip-path: polygon(14% 52%, 25% 44%, 43% 68%, 72% 8%, 86% 14%, 50% 92%, 38% 92%);
}
.tri { display: block; width: 16px; height: 10px; background: #bcbcbc; }
.tri.up { clip-path: polygon(0 100%, 50% 0, 100% 100%); }
.tri.down { clip-path: polygon(0 0, 100% 0, 50% 100%); }
.tri.left { width: 8px; height: 16px; clip-path: polygon(100% 0, 100% 100%, 0 50%); }
.tri.right { width: 8px; height: 16px; clip-path: polygon(0 0, 100% 50%, 0 100%); }

/* Window chrome */
.titlebar {
  display: flex;
  align-items: center;
  gap: 16px;
  height: 55px;
  padding: 0 14px 2px;
  background: #473d38;
  border-bottom: 1px solid #0c0c0c;
}
.light { width: 24px; height: 24px; border-radius: 50%; background: #69615c; }
.light.close { background: #ed6a5e; }
.light.zoom { background: #61c554; }

.main-window {
  height: 100%;
  display: flex;
  flex-direction: column;
  background: #323232;
  border-right: 2px solid #626262;
  border-radius: 20px;
  overflow: hidden;
}

/* Toolbars */
.toolbar {
  display: flex;
  align-items: center;
  height: 78px;
  padding-bottom: 3px;
  background: linear-gradient(#353535, #303030);
  border-bottom: 1px solid #7b7b7b;
  box-shadow: inset 0 -3px #252525;
}
.toolbar-last { height: 77px; padding-bottom: 1px; border-bottom: 2px solid #7b7b7b; }
.grip {
  flex: none;
  width: 10px;
  height: 34px;
  margin: 0 5px 0 8px;
  background: repeating-linear-gradient(#0000 0 4px, #323232 4px 6px), linear-gradient(90deg, #808080 4px, #0000 4px 6px, #808080 6px);
}
.grip-next { margin-left: 17px; }
.tool { flex: none; width: 66px; height: 62px; display: flex; align-items: center; justify-content: center; }
.tool svg { width: 48px; height: 48px; overflow: visible; }
.tool-active { background: #202020; border: 2px solid #555; border-radius: 5px; outline: 2px solid #262626; width: 60px; margin: 0 3px; }
.drop { flex: none; width: 24px; }
.drop svg { width: 24px; height: 24px; }
.tool-end { display: flex; align-items: center; margin-left: auto; margin-right: 370px; }
.tool-end-narrow { margin-right: 497px; }

/* Docks */
.workspace { flex: 1; min-height: 0; display: flex; border-top: 1px solid #272727; }
.docks { width: 898px; display: flex; flex-direction: column; }
.browser { flex: 579 1 0; min-height: 0; display: flex; flex-direction: column; padding-top: 2px; }
.layers { flex: 538 1 0; min-height: 0; display: flex; flex-direction: column; }
.dock-title { font-size: 21px; font-weight: 500; line-height: 35px; padding-left: 6px; }
.dock-tools { flex: none; display: flex; align-items: center; gap: 18px; height: 64px; padding: 0 14px; border-bottom: 2px solid #272727; }
.dock-tools svg { width: 32px; height: 32px; }
.dock-tools button { width: 32px; }
.dock-tools .menu { width: 54px; display: flex; align-items: center; }
.dock-tools .mini { width: 24px; height: 24px; }
.dock-tools .wide { width: 36px; height: 34px; }
.tree-view, .layer-view { flex: 1; min-height: 0; overflow: hidden; background: #1e1e1e; }
.tree { width: max-content; }
.tree li { display: flex; align-items: center; height: 36px; padding-right: 8px; }
.tree li svg { width: 32px; height: 32px; margin-right: 12px; }
.tree .child { padding-left: 32px; }
.twist { flex: none; width: 38px; height: 16px; display: flex; }
.twist-open::before { content: ""; width: 16px; height: 8px; margin: 4px 0 0 8px; background: #a5a5a5; clip-path: polygon(0 0, 100% 0, 50% 100%); }
.twist-closed::before { content: ""; width: 8px; height: 16px; margin-left: 12px; background: #a5a5a5; clip-path: polygon(0 0, 100% 50%, 0 100%); }
.selected, .layer-row { background: #464646; color: #fff; }
.layer-row { display: flex; align-items: center; height: 36px; padding-left: 4px; }
.layer-row .twist { width: 42px; }
.layer-row svg { width: 27px; height: 27px; margin: 0 13px 0 16px; }
.layer-row label { font-size: 26px; font-weight: 700; text-decoration: underline; text-decoration-thickness: 3px; text-underline-offset: 5px; text-decoration-skip-ink: none; }

.split-h { flex: none; height: 16px; display: flex; align-items: center; justify-content: center; }
.dots-h { width: 34px; height: 4px; background: repeating-linear-gradient(90deg, #808080 0 4px, #0000 4px 6px); }

.canvas { flex: 1; background: #fff; border-top: 1px solid #111; position: relative; }
.marker { position: absolute; right: 137px; bottom: 112px; width: 5px; height: 5px; border-radius: 50%; background: #d5381f; }

/* Status bar */
.statusbar { flex: none; height: 60px; display: flex; align-items: center; padding: 4px 12px 0 6px; border-top: 1px solid #232323; }
.locator { width: 428px; height: 48px; display: flex; align-items: center; gap: 15px; padding-left: 15px; background: #1e1e1e; border: 2px solid #282828; border-radius: 5px; }
.locator svg, .side-search svg, .filter-box svg { width: 26px; height: 26px; }
.ready { margin-left: 16px; color: #000; font-size: 21px; font-weight: 600; }
.status-end { display: flex; align-items: center; margin-left: auto; }
.spin { width: 186px; height: 46px; display: flex; background: #1e1e1e; border: 2px solid #282828; border-radius: 6px; font-size: 22px; }
.spin input { padding-left: 8px; width: 0; }
.spin-buttons { width: 27px; display: flex; flex-direction: column; justify-content: space-evenly; background: linear-gradient(90deg, #444, #3a3a3a); border: 1px solid #5a5a5a; border-radius: 0 5px 5px 0; }
.spin-buttons button { display: flex; justify-content: center; }
.render { display: flex; align-items: center; gap: 10px; margin-left: 11px; font-size: 21px; }
.crs-status { position: relative; display: flex; align-items: center; gap: 5px; width: 182px; height: 56px; margin-left: 34px; font-size: 22px; color: #000; }
.crs-status svg { width: 32px; height: 32px; filter: grayscale(1) brightness(1.2); }
.crs-status::after { content: ""; position: absolute; inset: 0 0 0 5px; border: 5px solid #d5381f; background: rgb(154 34 15 / 50%); }
.messages { margin-left: 20px; }
.messages svg { width: 32px; height: 30px; }

/* Dialog window */
.dialog {
  position: absolute;
  inset: 0 602px 0 562px;
  display: flex;
  flex-direction: column;
  background: #323232;
  border: 2px solid #616161;
  border-width: 0 2px;
  border-radius: 20px;
  overflow: hidden;
  box-shadow: 0 0 0 1px #000, 0 20px 110px rgb(0 0 0 / 75%);
}
.dialog h1 { flex: 1; padding-right: 120px; text-align: center; font-size: 26px; line-height: 32px; font-weight: 700; color: #c9c5c3; }
.dialog-body { flex: 1; min-height: 0; display: grid; grid-template-columns: 298px 10px 1fr; }
.sidebar { background: #444; }
.side-search { display: flex; align-items: center; height: 47px; padding: 0 0 2px 14px; background: #1e1e1e; border-radius: 0 4px 4px 0; }
.side-list { padding-top: 12px; }
.side-list button { display: flex; align-items: center; gap: 16px; width: 100%; height: 72px; padding-left: 8px; font-size: 24px; color: #fff; text-align: left; }
.side-list .current { background: #303030; padding-left: 14px; color: #dedede; }
.side-list svg { width: 48px; height: 48px; }
.split-v { display: flex; align-items: center; justify-content: center; }
.dots-v { width: 4px; height: 34px; background: repeating-linear-gradient(#808080 0 4px, #0000 4px 6px); }

.pane { display: flex; flex-direction: column; min-width: 0; min-height: 0; padding-right: 4px; }
.pane-title { font-size: 26px; line-height: 44px; padding: 2px 0 0 2px; }
.frame { flex: 1; min-height: 0; display: flex; flex-direction: column; padding: 26px 22px 22px 20px; border: 2px solid #3f3f3f; border-radius: 4px; }
.no-crs { display: flex; align-items: center; gap: 10px; height: 32px; margin-bottom: 17px; }
.filter-row { display: flex; align-items: center; gap: 14px; }
.filter-box { flex: 1; display: flex; align-items: center; height: 48px; padding-left: 14px; background: #1e1e1e; border: 2px solid #282828; border-radius: 5px; }
.section-title { font-size: 26px; line-height: 56px; }
.section-row { flex: none; display: flex; align-items: center; justify-content: space-between; height: 51px; padding: 0 12px 14px 0; }
.section-row h3 { font-size: 26px; }
.hide-dep { display: flex; align-items: center; gap: 12px; font-size: 18px; }

/* Item views */
.view { display: flex; flex-direction: column; min-height: 0; background: #1e1e1e; border: 1px solid #262626; overflow: hidden; }
.view-main { flex: 1; min-height: 0; display: flex; }
.view-body { flex: 1; min-height: 0; overflow: hidden; }
.recent { flex: 452 1 0; }
.predefined { flex: 362 1 0; }
.frame > .split-h { height: 12px; }
.frame > .split-thin { height: 10px; }
table { width: 100%; table-layout: fixed; border-collapse: separate; border-spacing: 0; }
.col-name { width: 868px; }
th { height: 34px; padding: 2px 0 0 5px; background: linear-gradient(#404040, #373737); border-top: 1px solid #5a5a5a; border-bottom: 2px solid #1c1c1c; text-align: left; font-size: 22px; font-weight: 400; line-height: 24px; color: #000; }
th + th { padding-left: 7px; border-left: 2px solid #555; }
td { height: 36px; padding: 0 0 0 7px; line-height: 32px; white-space: nowrap; }
.recent td { height: 32px; }
td + td { padding-left: 11px; }
td.leaf { padding-left: 127px; }
td.branch { padding-left: 53px; display: flex; align-items: center; gap: 19px; }
.alt { background: #292929; }
.chosen { background: #464646; color: #fff; }
.active { background: linear-gradient(#2a6bdb, #1f5bd3); color: #fff; }

/* Scroll bars */
.scroll-x, .scroll-y { flex: none; display: flex; background: #2c2c2c; gap: 3px; }
.scroll-x { height: 28px; }
.scroll-y { width: 28px; flex-direction: column; }
.scroll-x-corner { padding-right: 29px; }
.scroll-x button, .scroll-y button, .thumb { background: linear-gradient(#444, #3a3a3a); border: 2px solid #575757; }
.scroll-x button, .scroll-y button { flex: none; width: 27px; height: 26px; display: flex; align-items: center; justify-content: center; }
.track { flex: 1; display: flex; background: #353535; }
.scroll-x .thumb { height: 26px; width: 100%; }
.scroll-y .track { flex-direction: column; }
.scroll-y .thumb { width: 27px; }
.scroll-x .track-part .thumb { width: 98%; }
.track-crs { padding-top: 68px; }
.track-crs .thumb { height: 52px; }
.track-info .thumb { height: 52px; }

/* CRS details */
.details { flex: 302 1 0; min-height: 0; display: grid; grid-template-columns: 669px 1fr; gap: 15px; }
.info { flex-direction: row; }
.info-text { flex: 1; min-width: 0; overflow: hidden; padding: 6px 0 0 9px; font-size: 22px; line-height: 26px; }
.info-text h3 { font-size: 26px; line-height: 35px; }
.info-text h4 { font-size: 23px; line-height: 26px; margin: 22px 0 24px; }
.info-text ul { padding-left: 127px; }
.info-text li { display: flex; align-items: center; gap: 6px; height: 26px; white-space: nowrap; }
.info-text li::before { content: ""; width: 8px; height: 8px; border-radius: 50%; background: #dedede; }
.info-text .wkt { margin: 24px 0 0; }
.info-text pre { margin: 0; padding-left: 60px; font: 22px/26px "DejaVu Sans Mono", monospace; }
.map { width: 100%; height: 100%; min-height: 0; }
.map path { vector-effect: non-scaling-stroke; }
.sea { fill: #eed5f2; }
.land { fill: #dfc6dc; stroke: #9c879b; stroke-width: 1px; }
.border { fill: none; stroke: #776079; stroke-width: 1px; }
.extent { fill: rgb(240 88 117 / 40%); }
.extent-line { fill: none; stroke: rgb(238 70 100 / 45%); stroke-width: 7px; vector-effect: non-scaling-stroke; stroke-linejoin: round; }

.actions { flex: none; display: flex; align-items: center; gap: 14px; height: 65px; padding-top: 8px; }
.actions button { width: 158px; height: 46px; font-size: 24px; line-height: 36px; color: #000; background: linear-gradient(#464646, #363636); border: 2px solid #585858; border-radius: 6px; outline: 2px solid #242424; }
.actions .push { margin-left: auto; }
.actions .primary { background: linear-gradient(#525962, #3f464e); border-color: #4f78a5; outline: 2px solid #4d95e3; }
```
